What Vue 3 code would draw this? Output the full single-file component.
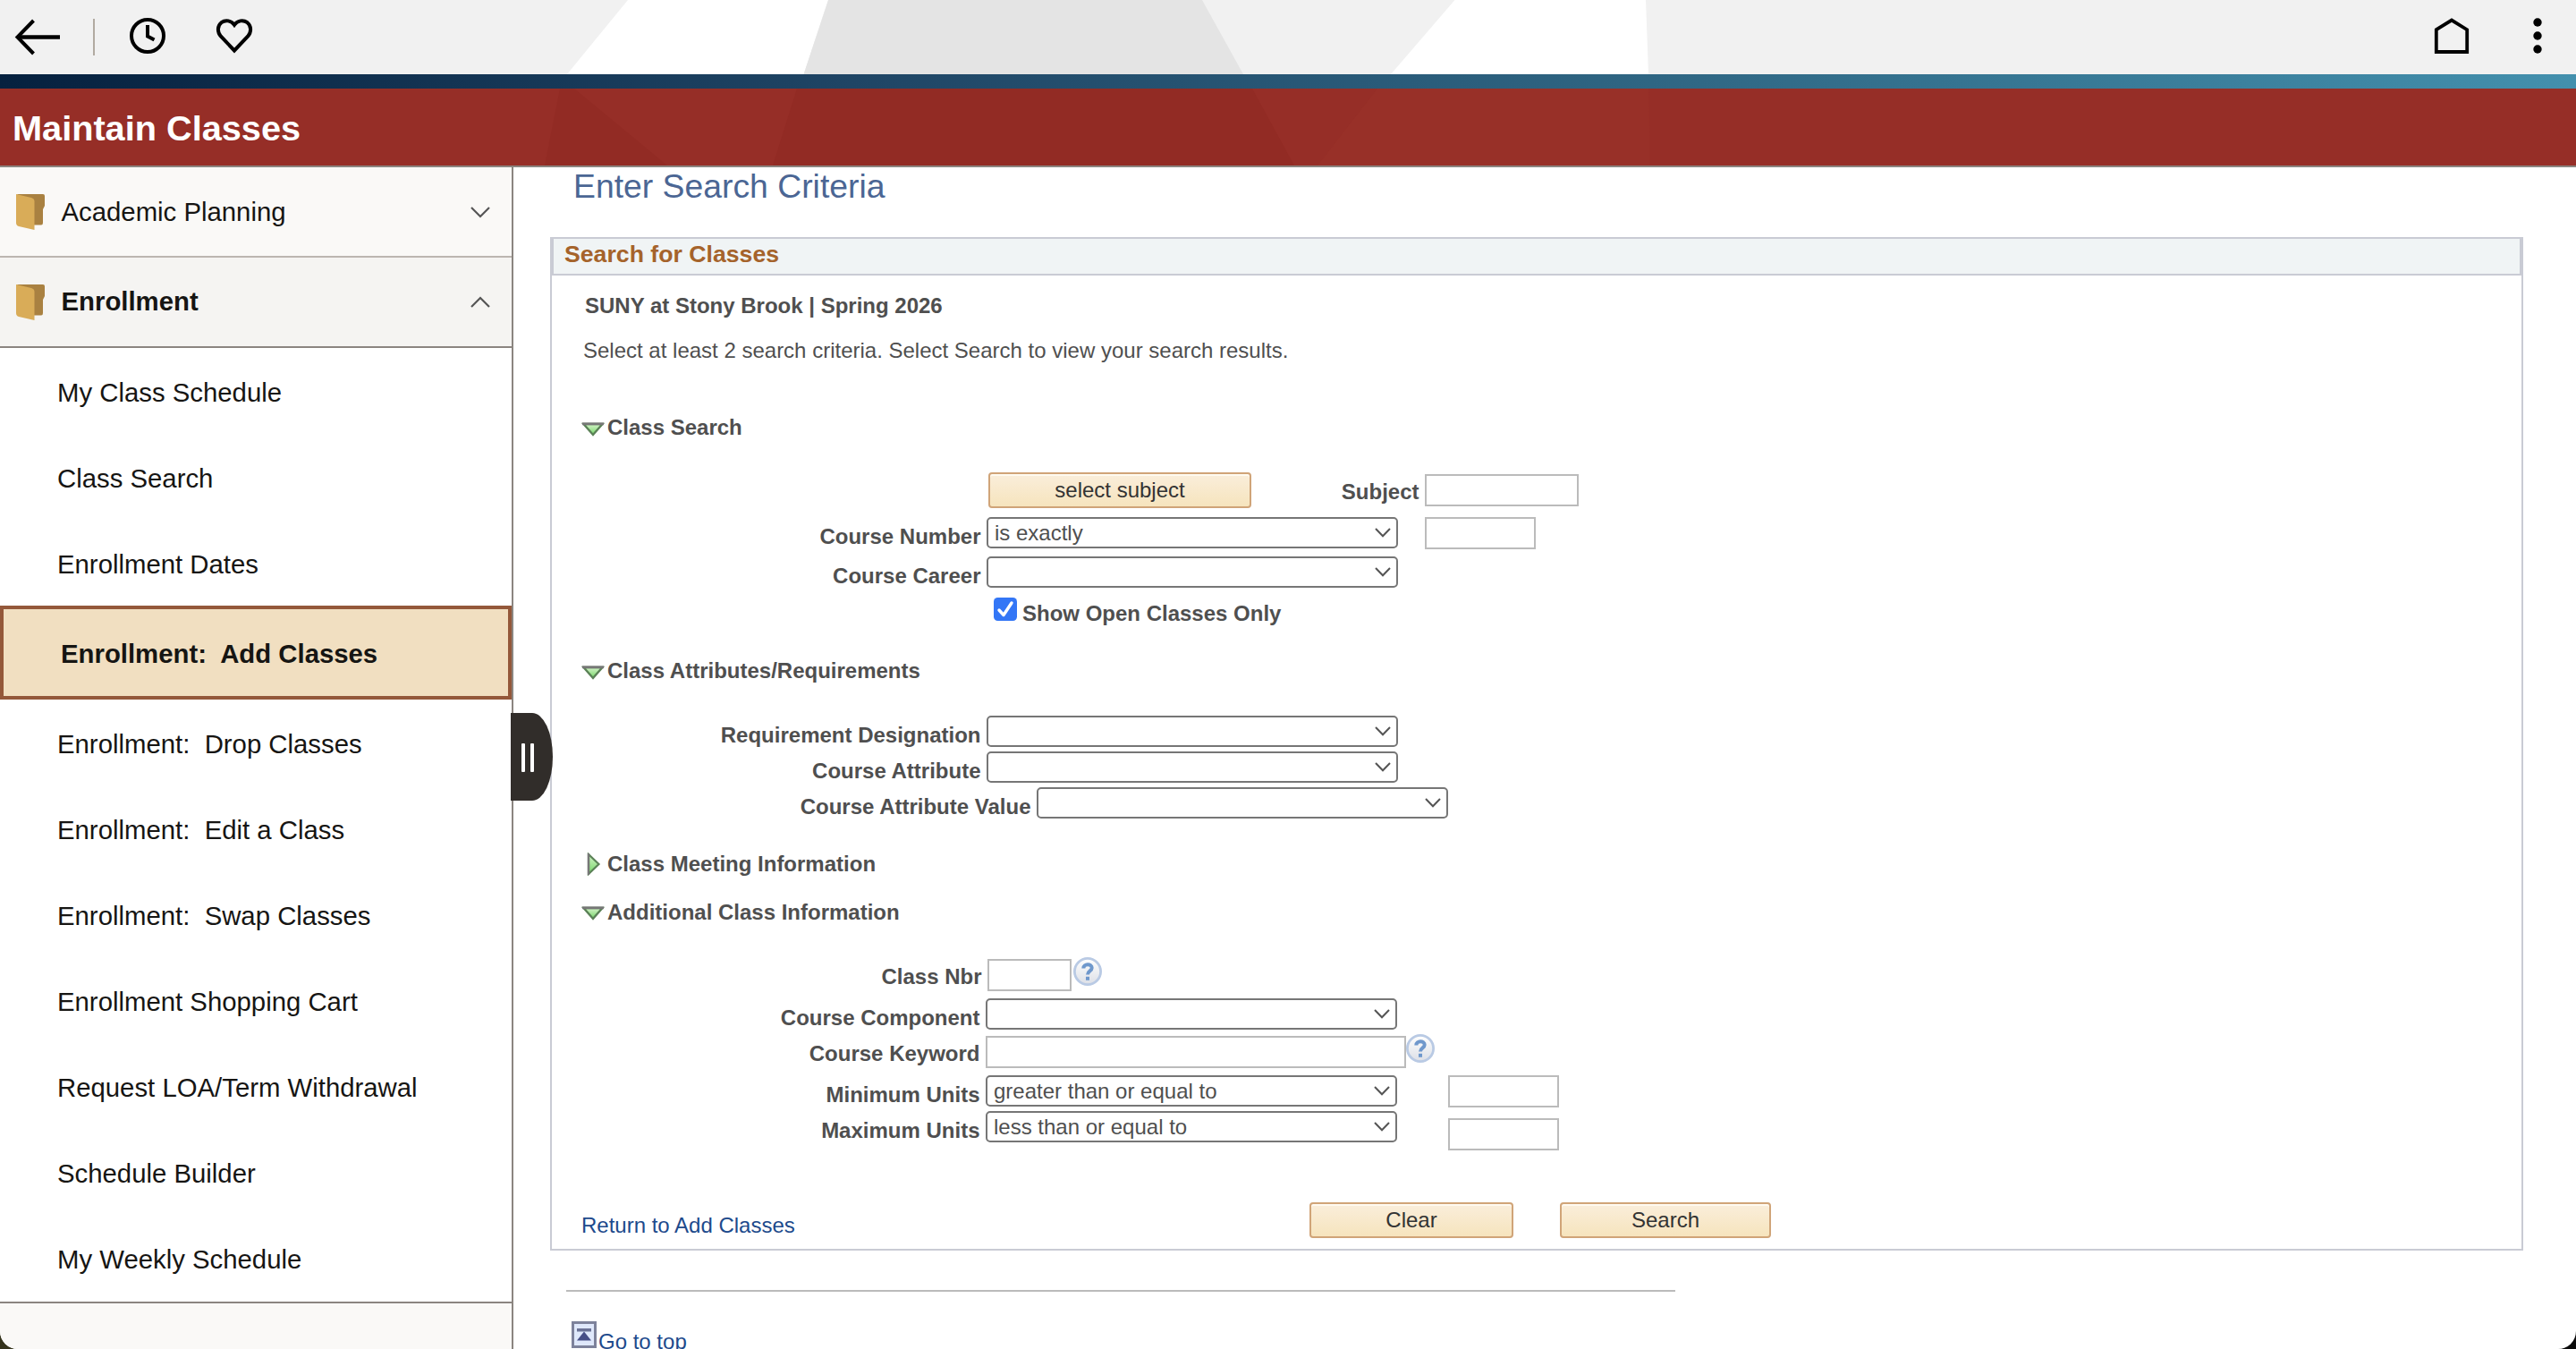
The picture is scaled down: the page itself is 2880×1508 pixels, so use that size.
<script setup>
import { ref } from 'vue'

const items = [
  'My Class Schedule',
  'Class Search',
  'Enrollment Dates',
  'Enrollment:  Add Classes',
  'Enrollment:  Drop Classes',
  'Enrollment:  Edit a Class',
  'Enrollment:  Swap Classes',
  'Enrollment Shopping Cart',
  'Request LOA/Term Withdrawal',
  'Schedule Builder',
  'My Weekly Schedule',
]

const active = ref('Enrollment:  Add Classes')
const openOnly = ref(true)
</script>

<template>
  <div class="app">
    <header class="topbar">
      <svg class="topbar-bg" width="2880" height="83" viewBox="0 0 2880 83">
        <polygon points="702,0 926,0 898.5,83 634,83" fill="#ffffff" />
        <polygon points="926,0 1344,0 1390,83 898.5,83" fill="#e4e4e4" />
        <polygon points="1626.5,0 1840,0 1843,83 1555,83" fill="#ffffff" />
      </svg>
      <svg class="icon back" width="54" height="44" viewBox="0 0 54 44" fill="none" stroke="#000" stroke-width="4">
        <path d="M23.500 3L5.500 21.500L23.500 40" />
        <path d="M5 21.500H53" stroke-width="4.400" />
      </svg>
      <span class="divider"></span>
      <svg class="icon clock" width="42" height="42" viewBox="0 0 42 42" fill="none" stroke="#000" stroke-width="4">
        <circle cx="21" cy="21" r="18" />
        <path d="M21 9V21.500L28.500 25.500" />
      </svg>
      <svg class="icon heart" width="42" height="40" viewBox="0 0 42 40" fill="none" stroke="#000" stroke-width="4">
        <path d="M21 36.500L5.800 20.500C1.500 15.500 2.200 8.600 6.500 5.200C11.200 1.700 17.600 3 21 7.800C24.400 3 30.800 1.700 35.500 5.200C39.800 8.600 40.500 15.500 36.200 20.500Z" />
      </svg>
      <span class="spacer"></span>
      <svg class="icon home" width="40" height="42" viewBox="0 0 40 42" fill="none" stroke="#000" stroke-width="3.800">
        <path d="M2.800 14.200L20 3.600L37.200 14.200V39H2.800Z" />
      </svg>
      <svg class="icon dots" width="12" height="42" viewBox="0 0 12 42">
        <circle cx="6" cy="6" r="4.700" />
        <circle cx="6" cy="21" r="4.700" />
        <circle cx="6" cy="36" r="4.700" />
      </svg>
    </header>
    <div class="stripe"></div>
    <div class="titlebar">
      <svg class="title-bg" width="2880" height="86" viewBox="0 0 2880 86">
        <polygon points="626,0 642,0 746,86 609,86" fill="#922b24" />
        <polygon points="891,0 1400,0 1447,86 864,86" fill="#922b24" />
        <polygon points="1540,0 1843,0 1845,86 1473,86" fill="#983028" />
      </svg>
      <h1>Maintain Classes</h1>
    </div>

    <div class="layout">
      <nav class="sidebar">
        <div class="group">
          <svg class="folder" width="32" height="40" viewBox="0 0 32 40">
            <path d="M0 0H30Q32 0 32 2V13L30 17V32Q30 34.500 28 34.500H14V6Z" fill="#a98141" />
            <path d="M0 0L17 4Q20.500 5 20.500 8V40L3 36Q0 35 0 32Z" fill="#d9ac58" />
          </svg>
          <span>Academic Planning</span>
          <svg class="arrow" width="22" height="14" viewBox="0 0 22 14" fill="none" stroke="#555" stroke-width="2.200">
            <path d="M1 2L11 12L21 2" />
          </svg>
        </div>
        <div class="group open">
          <svg class="folder" width="32" height="40" viewBox="0 0 32 40">
            <path d="M0 0H30Q32 0 32 2V13L30 17V32Q30 34.500 28 34.500H14V6Z" fill="#a98141" />
            <path d="M0 0L17 4Q20.500 5 20.500 8V40L3 36Q0 35 0 32Z" fill="#d9ac58" />
          </svg>
          <span>Enrollment</span>
          <svg class="arrow" width="22" height="14" viewBox="0 0 22 14" fill="none" stroke="#555" stroke-width="2.200">
            <path d="M1 12L11 2L21 12" />
          </svg>
        </div>
        <ul class="items">
          <li
            v-for="item in items"
            :key="item"
            :class="{ item: true, active: item === active }"
            @click="active = item"
          >{{ item }}</li>
        </ul>
        <div class="handle"><i></i><i></i></div>
      </nav>

      <main class="content">
        <h2>Enter Search Criteria</h2>

        <section class="panel">
          <h3>Search for Classes</h3>
          <p class="institution">SUNY at Stony Brook | Spring 2026</p>
          <p class="instructions">Select at least 2 search criteria. Select Search to view your search results.</p>

          <div class="section-title">
            <svg class="tri" width="26" height="16" viewBox="0 0 26 16"><use href="#tri-down" /></svg>
            <span>Class Search</span>
          </div>
          <div class="fields search-fields">
            <div class="row">
              <button class="btn subject-btn">select subject</button>
              <label class="subject-label">Subject</label>
              <input class="box w172 drop2" type="text">
            </div>
            <div class="row">
              <label class="label">Course Number</label>
              <div class="dropdown">
                <select><option>is exactly</option></select>
                <svg class="caret" width="18" height="11" viewBox="0 0 18 11"><use href="#caret" /></svg>
              </div>
              <input class="box w124 after-select" type="text">
            </div>
            <div class="row">
              <label class="label">Course Career</label>
              <div class="dropdown">
                <select><option></option></select>
                <svg class="caret" width="18" height="11" viewBox="0 0 18 11"><use href="#caret" /></svg>
              </div>
            </div>
            <div class="row check-row" @click="openOnly = !openOnly">
              <svg width="26" height="26" viewBox="0 0 26 26">
                <rect width="26" height="26" rx="4.500" fill="#3376f6" />
                <path v-if="openOnly" d="M6 14L11 19.500L20 6" fill="none" stroke="#fff" stroke-width="3.400" stroke-linecap="round" stroke-linejoin="round" />
              </svg>
              <label>Show Open Classes Only</label>
            </div>
          </div>

          <div class="section-title">
            <svg class="tri" width="26" height="16" viewBox="0 0 26 16"><use href="#tri-down" /></svg>
            <span>Class Attributes/Requirements</span>
          </div>
          <div class="fields attribute-fields">
            <div v-for="name in ['Requirement Designation', 'Course Attribute', 'Course Attribute Value']" :key="name" class="row">
              <label :class="{ label: true, wide: name === 'Course Attribute Value' }">{{ name }}</label>
              <div class="dropdown">
                <select><option></option></select>
                <svg class="caret" width="18" height="11" viewBox="0 0 18 11"><use href="#caret" /></svg>
              </div>
            </div>
          </div>

          <div class="section-title meeting">
            <svg class="tri right" width="16" height="26" viewBox="0 0 16 26">
              <path d="M2 2L13.500 13L2 24Z" fill="url(#green)" stroke="#5b8257" stroke-width="2.200" />
              <path d="M2 1V25" stroke="#777" stroke-width="2.400" />
            </svg>
            <span>Class Meeting Information</span>
          </div>
          <div class="section-title additional">
            <svg class="tri" width="26" height="16" viewBox="0 0 26 16"><use href="#tri-down" /></svg>
            <span>Additional Class Information</span>
          </div>
          <div class="fields additional-fields">
            <div class="row">
              <label class="label for-box nbr">Class Nbr</label>
              <input class="box w94" type="text">
              <svg class="help nbr-help" width="32" height="32" viewBox="0 0 32 32"><use href="#help" /></svg>
            </div>
            <div class="row">
              <label class="label">Course Component</label>
              <div class="dropdown">
                <select><option></option></select>
                <svg class="caret" width="18" height="11" viewBox="0 0 18 11"><use href="#caret" /></svg>
              </div>
            </div>
            <div class="row">
              <label class="label for-box">Course Keyword</label>
              <input class="box w470" type="text">
              <svg class="help" width="32" height="32" viewBox="0 0 32 32"><use href="#help" /></svg>
            </div>
            <div class="row">
              <label class="label">Minimum Units</label>
              <div class="dropdown">
                <select><option>greater than or equal to</option></select>
                <svg class="caret" width="18" height="11" viewBox="0 0 18 11"><use href="#caret" /></svg>
              </div>
              <input class="box w124 units" type="text">
            </div>
            <div class="row">
              <label class="label">Maximum Units</label>
              <div class="dropdown">
                <select><option>less than or equal to</option></select>
                <svg class="caret" width="18" height="11" viewBox="0 0 18 11"><use href="#caret" /></svg>
              </div>
              <input class="box w124 units drop8" type="text">
            </div>
          </div>

          <div class="actions">
            <a class="return">Return to Add Classes</a>
            <button class="btn clear-btn">Clear</button>
            <button class="btn search-btn">Search</button>
          </div>
        </section>

        <div class="rule"></div>
        <a class="go-top">
          <svg width="28" height="30" viewBox="0 0 28 30">
            <rect x="1.500" y="1.500" width="25" height="27" fill="#dfe8fb" stroke="#7d829b" stroke-width="3" />
            <rect x="6" y="8" width="16" height="3.500" fill="#6b7296" />
            <path d="M14 11.500L22 21.500H6Z" fill="#474f87" />
          </svg>
          <span>Go to top</span>
        </a>
      </main>
    </div>

    <!-- shared shapes -->
    <svg class="defs" width="0" height="0">
      <defs>
        <linearGradient id="green" x1="0" y1="0" x2="0" y2="1">
          <stop offset="0" stop-color="#d5f3c9" />
          <stop offset="1" stop-color="#74d667" />
        </linearGradient>
        <linearGradient id="help-fill" x1="0" y1="0" x2="0" y2="1">
          <stop offset="0" stop-color="#ffffff" />
          <stop offset="1" stop-color="#dcdfe6" />
        </linearGradient>
        <symbol id="tri-down" viewBox="0 0 26 16">
          <path d="M2.500 2H23.500L13 14Z" fill="url(#green)" stroke="#5b8257" stroke-width="2.400" />
          <path d="M1 1.800H25" stroke="#777" stroke-width="2.800" />
        </symbol>
        <symbol id="caret" viewBox="0 0 18 11">
          <path d="M1 1L9 9.300L17 1" fill="none" stroke="#555" stroke-width="2" />
        </symbol>
        <symbol id="help" viewBox="0 0 32 32">
          <circle cx="16" cy="16" r="14.600" fill="url(#help-fill)" stroke="#b9cae4" stroke-width="2.800" />
          <path d="M11.300 12.400C11.300 7 20.700 7 20.700 12C20.700 15.400 16 15.400 16 19.500" fill="none" stroke="#6f98cc" stroke-width="4" />
          <rect x="14" y="21.800" width="4" height="4" fill="#6f98cc" />
        </symbol>
      </defs>
    </svg>
  </div>
</template>

<style>
html,
body {
  margin: 0;
  background: linear-gradient(90deg, #35341d 50%, #0c0c0c 50%);
}
</style>

<style scoped>
.app {
  width: 2880px;
  height: 1508px;
  overflow: hidden;
  position: relative;
  background: #fff;
  border-radius: 0 0 20px 20px;
  font-family: "Liberation Sans", Arial, sans-serif;
  font-size: 24px;
  line-height: 28px;
  color: #4f4f4f;
}

h1,
h2,
h3,
p,
ul {
  margin: 0;
  padding: 0;
}

.defs {
  position: absolute;
}

.topbar {
  position: relative;
  height: 83px;
  background: #f1f1f1;
  display: flex;
  align-items: flex-start;
}

.topbar-bg,
.title-bg {
  position: absolute;
  top: 0;
  left: 0;
}

.icon {
  position: relative;
  flex-shrink: 0;
}

.back {
  margin: 20px 0 0 14px;
}

.divider {
  width: 2px;
  height: 41px;
  margin: 21px 0 0 36px;
  background: #b1aaa1;
}

.clock {
  margin: 19px 0 0 38px;
}

.heart {
  margin: 20px 0 0 55px;
}

.spacer {
  flex: 1;
}

.home {
  margin: 19px 70px 0 0;
}

.dots {
  margin: 19px 37px 0 0;
}

.stripe {
  height: 16px;
  background: linear-gradient(90deg, #06213f 0%, #1f4565 33%, #306885 66%, #4390ad 100%);
}

.titlebar {
  position: relative;
  height: 86px;
  background: #962e27;
  border-bottom: 2px solid #8b8580;
}

.titlebar h1 {
  position: relative;
  padding-left: 14px;
  color: #fff;
  font-size: 39.7px;
  line-height: 89px;
}

.layout {
  display: flex;
  height: 1321px;
}

.sidebar {
  position: relative;
  box-sizing: border-box;
  width: 574px;
  flex-shrink: 0;
  background: #faf9f7;
  border-right: 2px solid #8b8580;
  color: #161513;
  font-size: 29.33px;
}

.group {
  display: flex;
  align-items: center;
  height: 99px;
  padding: 0 24px 0 18px;
  border-bottom: 2px solid #bcb6b1;
}

.group span {
  flex: 1;
  padding-left: 18.5px;
}

.group.open {
  background: #f5f4f2;
  border-bottom-color: #8b8580;
  font-weight: bold;
}

.group.open span {
  margin-top: -2px;
}

.items {
  list-style: none;
  background: #fff;
  height: 1066px;
  border-bottom: 2px solid #8b8580;
}

.item {
  box-sizing: border-box;
  height: 96.1px;
  padding: 2.6px 0 0 64px;
  line-height: 93px;
  white-space: pre;
}

.item.active {
  height: 105px;
  background: #f1dfc1;
  border: 4px solid #94583a;
  font-weight: bold;
}

.handle {
  position: absolute;
  left: 571px;
  top: 610px;
  width: 47px;
  height: 98px;
  box-sizing: border-box;
  padding: 34px 0 0 12px;
  display: flex;
  gap: 6px;
  background: #312d2a;
  border-radius: 0 23px 23px 0 / 0 49px 49px 0;
}

.handle i {
  width: 4px;
  height: 32px;
  border-radius: 1px;
  background: #fff;
}

.content {
  flex: 1;
}

.content h2 {
  padding-left: 67px;
  color: #4b6694;
  font-size: 37.33px;
  font-weight: normal;
  line-height: 42px;
}

.panel {
  box-sizing: border-box;
  width: 2206px;
  height: 1133px;
  margin: 36px 0 0 41px;
  border: 2px solid #c9cbd4;
  border-top: none;
}

.panel h3 {
  height: 39px;
  padding-left: 12px;
  border: 2px solid #c9cbd4;
  background: #f0f4f5;
  color: #a5632b;
  font-size: 26.67px;
  line-height: 35px;
}

.institution {
  padding: 20px 0 0 37px;
  font-weight: bold;
}

.instructions {
  padding: 21.5px 0 0 35px;
}

.instructions + .section-title {
  margin-top: 58.5px;
}

.section-title {
  display: flex;
  height: 28px;
  padding-left: 33px;
  font-weight: bold;
}

.section-title span {
  margin-left: 3px;
}

.tri {
  margin-top: 8px;
}

.tri.right {
  margin: 1px 4px 0 6px;
}

.meeting {
  margin-bottom: 25.7px;
}

.additional span {
  padding-top: 1px;
}

.fields {
  display: grid;
  padding-top: 36.5px;
}

.search-fields {
  padding-top: 36px;
  grid-template-rows: 50px 44px 46px 67.5px;
}

.attribute-fields {
  grid-template-rows: 40px 40px 71.7px;
}

.additional-fields {
  padding-top: 38.5px;
  grid-template-rows: 44px 42px 44px 40px 40px;
}

.row {
  display: flex;
  align-items: flex-start;
}

label {
  font-weight: bold;
}

.label {
  width: 479.5px;
  margin-right: 6.5px;
  padding-top: 7.5px;
  text-align: right;
}

.label.wide {
  width: 535.5px;
}

.label.for-box {
  padding-top: 5.5px;
}

.additional-fields .label {
  width: 478.5px;
  padding-top: 8.6px;
}

.additional-fields .label.for-box {
  padding-top: 6.6px;
}

.additional-fields .label.nbr {
  width: 480.5px;
}

.subject-btn {
  width: 294px;
  margin-left: 488px;
}

.subject-label {
  width: 187.5px;
  margin-right: 6.5px;
  padding-top: 7.5px;
  text-align: right;
}

.dropdown {
  position: relative;
  width: 460px;
  height: 35px;
}

.dropdown select {
  appearance: none;
  box-sizing: border-box;
  display: block;
  width: 460px;
  height: 35px;
  padding: 0 0 0 7px;
  border: 2px solid #767676;
  border-radius: 5px;
  background: #fff;
  color: #4f4f4f;
  font: 24px "Liberation Sans", Arial, sans-serif;
}

.caret {
  position: absolute;
  top: 12px;
  right: 8px;
}

.box {
  box-sizing: border-box;
  height: 36px;
  margin: 0;
  padding: 0;
  border: 2px solid #bbb;
  background: #fff;
}

.w94 {
  width: 94px;
}

.w124 {
  width: 124px;
}

.w172 {
  width: 172px;
}

.w470 {
  width: 470px;
}

.drop2 {
  margin-top: 2px;
}

.after-select {
  margin-left: 30px;
}

.units {
  margin-left: 57px;
}

.drop8 {
  margin-top: 8px;
}

.help {
  margin-top: -2px;
}

.nbr-help {
  margin-left: 2px;
}

.check-row {
  padding-left: 494px;
}

.check-row label {
  padding: 3.5px 0 0 6px;
}

.btn {
  box-sizing: border-box;
  height: 40px;
  padding: 0;
  border: 2px solid #d0a478;
  border-radius: 4px;
  background: linear-gradient(#faeedb, #f6e4bd);
  box-shadow: inset 0 2px 0 #fffaf0;
  color: #333;
  font: 24px "Liberation Sans", Arial, sans-serif;
}

.actions {
  display: flex;
  padding: 62px 0 0 33px;
}

.return {
  width: 814px;
  padding-top: 12.6px;
}

.return,
.go-top {
  color: #1d4a8c;
}

.clear-btn {
  width: 228px;
}

.search-btn {
  width: 236px;
  margin-left: 52px;
}

.rule {
  width: 1240px;
  height: 2px;
  margin: 44px 0 0 59px;
  background: #bbb;
}

.go-top {
  display: flex;
  padding: 33px 0 0 65px;
}

.go-top span {
  padding: 9px 0 0 2px;
}
</style>
